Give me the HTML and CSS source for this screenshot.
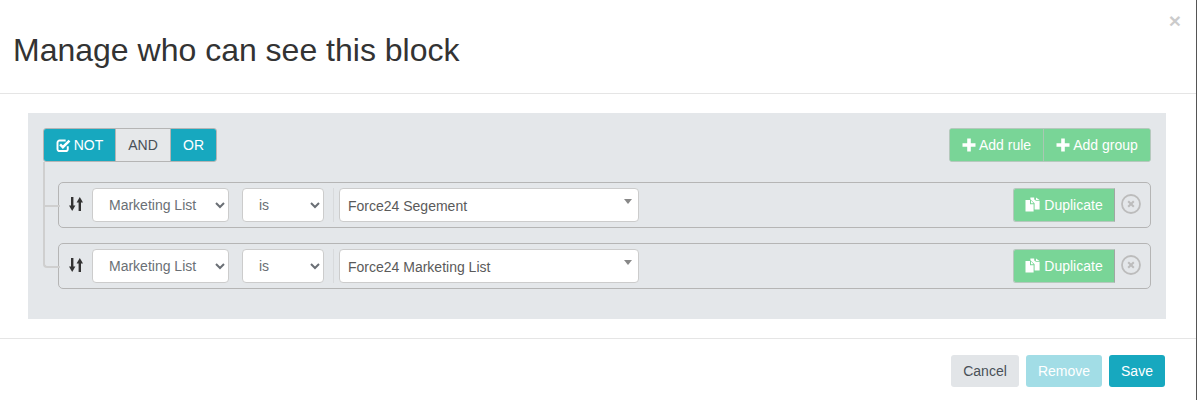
FILE: index.html
```html
<!DOCTYPE html>
<html lang="en">
<head>
<meta charset="utf-8">
<title>Manage who can see this block</title>
<link rel="stylesheet" href="styles.css">
</head>
<body>
<div class="modal">
  <header class="modal-header">
    <h1>Manage who can see this block</h1>
    <span class="close">×</span>
  </header>
  <main class="modal-body">
    <section class="builder">
      <div class="group-head">
        <div class="btn-group">
          <button class="btn teal not"><svg class="ic" viewBox="0 0 14 14" width="15" height="15"><path d="M11 7.6V10.2A2 2 0 0 1 9 12.2H3.4A2 2 0 0 1 1.4 10.2V4.4A2 2 0 0 1 3.4 2.4H9" fill="none" stroke="#fff" stroke-width="1.8"/><path d="M3.8 6L6.4 8.6L12.6 2.4" fill="none" stroke="#fff" stroke-width="2.4"/></svg>NOT</button>
          <button class="btn light">AND</button>
          <button class="btn teal">OR</button>
        </div>
        <div class="btn-group green-group">
          <button class="btn green"><svg class="ic" viewBox="0 0 14 14" width="14" height="14"><path d="M5.2 0.5H8.8V5.2H13.5V8.8H8.8V13.5H5.2V8.8H0.5V5.2H5.2Z" fill="#fff"/></svg>Add rule</button>
          <button class="btn green"><svg class="ic" viewBox="0 0 14 14" width="14" height="14"><path d="M5.2 0.5H8.8V5.2H13.5V8.8H8.8V13.5H5.2V8.8H0.5V5.2H5.2Z" fill="#fff"/></svg>Add group</button>
        </div>
      </div>
      <ul class="rules">
        <li class="rule">
          <svg class="sort" viewBox="0 0 14 16" width="14" height="16"><path d="M3.2 1V10" stroke="#333" stroke-width="2.4"/><path d="M0 9.6H6.4L3.2 15Z" fill="#333"/><path d="M10.8 15V6" stroke="#333" stroke-width="2.4"/><path d="M7.6 6.4H14L10.8 1Z" fill="#333"/></svg>
          <select class="sel sel-field"><option>Marketing List</option></select>
          <select class="sel sel-op"><option>is</option></select>
          <span class="divider"></span>
          <div class="combo">Force24 Segement<i class="caret"></i></div>
          <button class="btn green dup"><svg class="ic" viewBox="0 0 15 15" width="15" height="15"><path d="M0.5 3H5V7.2H8.6V14.5H0.5Z" fill="#fff"/><path d="M6 3.2L8.6 6.2H6Z" fill="#fff"/><path d="M5.4 0.5H9.2V2.8H10.4V3.8H14.6V12.6H9.6V6.2L5.4 2.2Z" fill="#fff"/><path d="M11 0.5L14.5 3H11Z" fill="#fff"/></svg>Duplicate</button>
          <svg class="remove" viewBox="0 0 20 20" width="20" height="20"><circle cx="10" cy="10" r="9" fill="none" stroke="#bcbcbc" stroke-width="1.8"/><path d="M7.2 7.2L12.8 12.8M12.8 7.2L7.2 12.8" stroke="#bcbcbc" stroke-width="2"/></svg>
        </li>
        <li class="rule">
          <svg class="sort" viewBox="0 0 14 16" width="14" height="16"><path d="M3.2 1V10" stroke="#333" stroke-width="2.4"/><path d="M0 9.6H6.4L3.2 15Z" fill="#333"/><path d="M10.8 15V6" stroke="#333" stroke-width="2.4"/><path d="M7.6 6.4H14L10.8 1Z" fill="#333"/></svg>
          <select class="sel sel-field"><option>Marketing List</option></select>
          <select class="sel sel-op"><option>is</option></select>
          <span class="divider"></span>
          <div class="combo">Force24 Marketing List<i class="caret"></i></div>
          <button class="btn green dup"><svg class="ic" viewBox="0 0 15 15" width="15" height="15"><path d="M0.5 3H5V7.2H8.6V14.5H0.5Z" fill="#fff"/><path d="M6 3.2L8.6 6.2H6Z" fill="#fff"/><path d="M5.4 0.5H9.2V2.8H10.4V3.8H14.6V12.6H9.6V6.2L5.4 2.2Z" fill="#fff"/><path d="M11 0.5L14.5 3H11Z" fill="#fff"/></svg>Duplicate</button>
          <svg class="remove" viewBox="0 0 20 20" width="20" height="20"><circle cx="10" cy="10" r="9" fill="none" stroke="#bcbcbc" stroke-width="1.8"/><path d="M7.2 7.2L12.8 12.8M12.8 7.2L7.2 12.8" stroke="#bcbcbc" stroke-width="2"/></svg>
        </li>
      </ul>
    </section>
  </main>
  <footer class="modal-footer">
    <button class="fbtn cancel">Cancel</button>
    <button class="fbtn removebtn">Remove</button>
    <button class="fbtn save">Save</button>
  </footer>
</div>
</body>
</html>
```

FILE: styles.css
```css
* { box-sizing: border-box; }
html, body { margin: 0; padding: 0; height: 100%; background: #fff; overflow: hidden; }
body { font-family: "Liberation Sans", Arial, sans-serif; font-size: 14px; color: #495057; }
.modal { width: 1197px; height: 400px; border-right: 1px solid #555; display: flex; flex-direction: column; background: #fff; }
.modal-header { height: 94px; border-bottom: 1px solid #e5e5e5; padding: 0 13px; display: flex; justify-content: space-between; position: relative; }
.modal-header h1 { margin: 33px 0 0; font-size: 32px; line-height: 35px; font-weight: 400; color: #333; }
.close { position: absolute; top: 9px; right: 15px; font-size: 21px; line-height: 24px; font-weight: 700; color: #000; opacity: .2; }
.modal-body { height: 245px; border-bottom: 1px solid #e5e5e5; padding: 19px 30px 0 28px; }
.builder { width: 1138px; height: 206px; background: #e4e7ea; padding: 15px 15px 0; }
.group-head { display: flex; justify-content: space-between; height: 34px; }
.btn-group { display: flex; border: 1px solid #b5b5b5; border-radius: 3px; overflow: hidden; height: 34px; }
.btn { font-family: inherit; font-size: 14px; line-height: 20px; border: 0; padding: 0; margin: 0; height: 32px; display: flex; align-items: center; justify-content: center; }
.teal { background: #17a8bf; color: #fff; }
.light { background: #e6e8ea; color: #495057; width: 56px; border-left: 1px solid #b5b5b5; border-right: 1px solid #b5b5b5; }
.not { width: 71px; }
.btn-group .teal:last-child { width: 45px; }
.ic { margin-right: 3px; flex: none; }
.green-group { border-color: #b5c9bd; background: #79d597; }
.green { background: #79d597; color: #fff; }
.green-group .green { width: 93px; }
.green-group .green + .green { width: 107px; border-left: 1px solid #a9c8b3; }
.rules { list-style: none; margin: 20px 0 0 15px; padding: 0; position: relative; }
.rule { height: 46px; border: 1px solid #b5b5b5; border-radius: 5px; margin-bottom: 15px; padding: 5px 9px 5px 10px; display: flex; align-items: center; position: relative; }
.rule::before { content: ""; position: absolute; left: -16px; top: -21px; width: 15px; height: 43px; border-left: 2px solid #cfcfcf; border-bottom: 2px solid #cfcfcf; }
.rule + .rule::before { top: -40px; height: 62px; border-bottom-left-radius: 4px; }
.sort { flex: none; margin: 0 9px 2px 0; }
.sel { font-family: inherit; font-size: 14px; height: 34px; background: #fff; color: #6a6f75; border: 1px solid #ccc; border-radius: 4px; padding: 0 12px; }
.sel-field { width: 137px; margin-right: 13px; }
.sel-op { width: 82px; margin-right: 9px; }
.divider { width: 1px; height: 34px; background: #d8dadc; margin-right: 5px; flex: none; }
.combo { width: 300px; height: 34px; background: #fff; border: 1px solid #ccc; border-radius: 4px; padding: 0 8px; line-height: 34px; color: #5a5a5a; position: relative; flex: none; }
.caret { position: absolute; right: 6px; top: 10px; border-left: 4px solid transparent; border-right: 4px solid transparent; border-top: 5px solid #888; }
.dup { margin-left: auto; width: 102px; height: 34px; border: 1px solid #b5c9bd; border-right: 1px solid #9fa8a2; border-radius: 3px 0 0 3px; }
.dup .ic { margin: 0 4px 2px 0; }
.remove { flex: none; margin: 0 0 2px 6px; }
.modal-footer { flex: 1; display: flex; justify-content: flex-end; padding: 16px 31px 0 0; gap: 7px; }
.fbtn { font-family: inherit; font-size: 14px; height: 32px; border: 0; border-radius: 3px; padding: 0; }
.cancel { width: 68px; background: #e2e5e8; color: #495057; }
.removebtn { width: 76px; background: #a2dde6; color: #fff; }
.save { width: 56px; background: #17a8bf; color: #fff; }
```
